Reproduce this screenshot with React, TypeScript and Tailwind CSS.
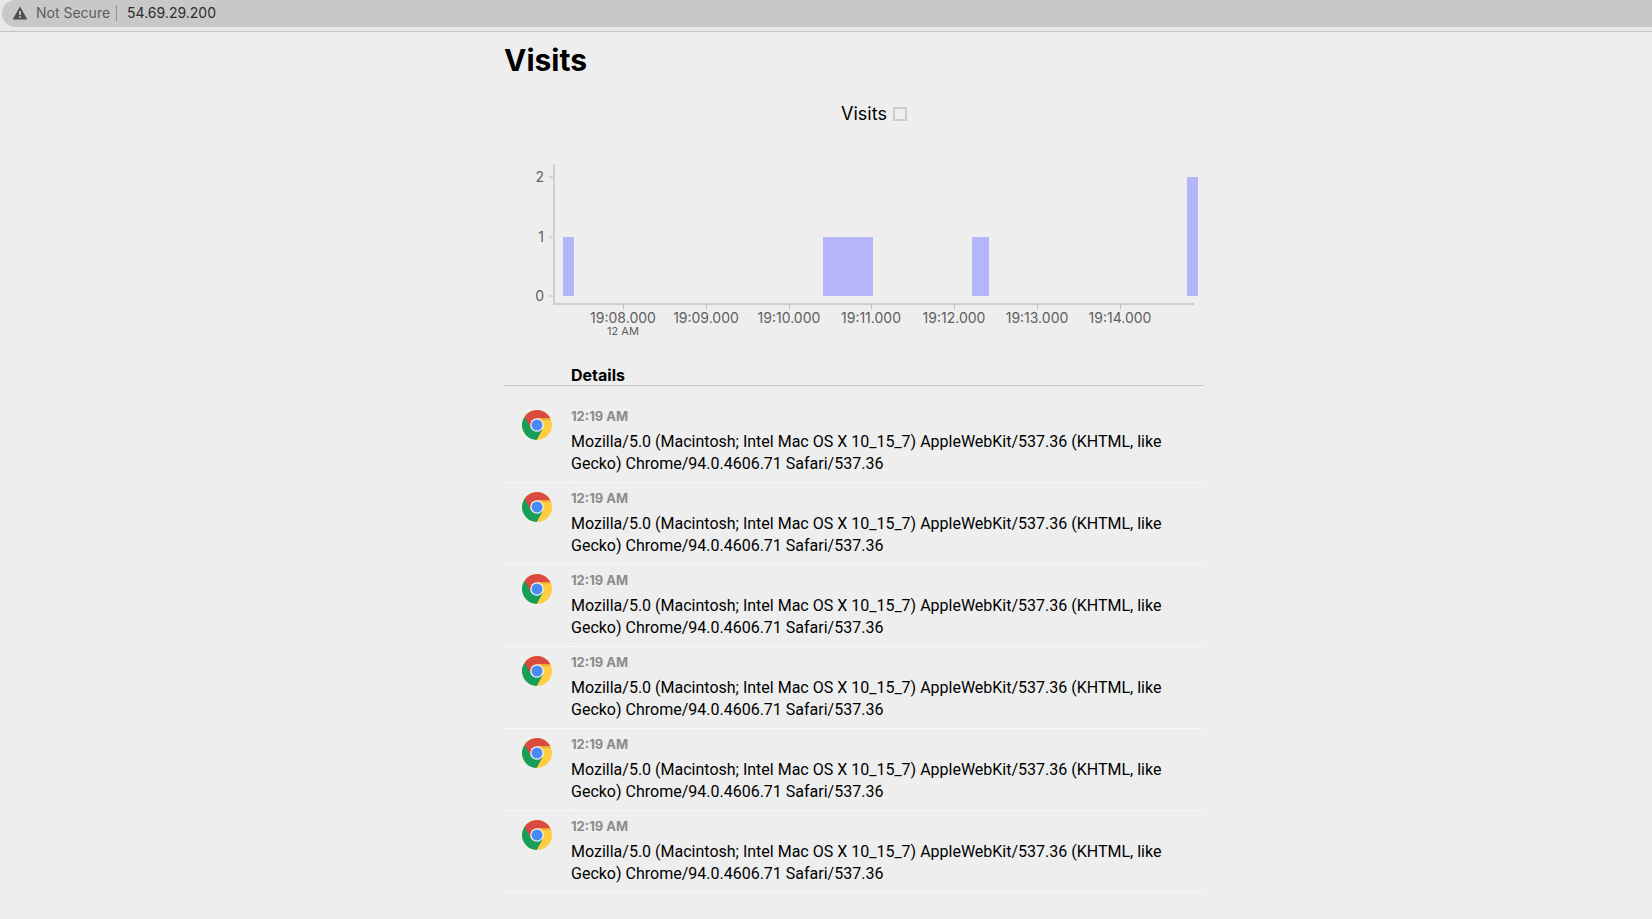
import React from "react";

const xTicks = [
  { x: 119, label: "19:08.000", sub: "12 AM" },
  { x: 202, label: "19:09.000" },
  { x: 285, label: "19:10.000" },
  { x: 367, label: "19:11.000" },
  { x: 450, label: "19:12.000" },
  { x: 533, label: "19:13.000" },
  { x: 616, label: "19:14.000" },
];

const yTicks = [
  { y: 37, label: "2" },
  { y: 97, label: "1" },
  { y: 156, label: "0" },
];

const bars = [
  { x: 59, width: 11, top: 97 },
  { x: 319, width: 17, top: 97 },
  { x: 336, width: 17, top: 97 },
  { x: 353, width: 16, top: 97 },
  { x: 468, width: 17, top: 97 },
  { x: 683, width: 11, top: 37 },
];

const seams = [336, 353];

const agent =
  "Mozilla/5.0 (Macintosh; Intel Mac OS X 10_15_7) AppleWebKit/537.36 (KHTML, like Gecko) Chrome/94.0.4606.71 Safari/537.36";

const visits = Array.from({ length: 6 }, (_, id) => ({ id, time: "12:19 AM", agent }));

function ChromeLogo() {
  return (
    <svg viewBox="0 0 48 48" className="block size-[30px]" role="img" aria-label="Chrome">
      <defs>
        <linearGradient id="chromeShade" x1="0" y1="0" x2="0" y2="1">
          <stop offset="0" stopColor="#b83a2e" stopOpacity="0.5" />
          <stop offset="1" stopColor="#b83a2e" stopOpacity="0" />
        </linearGradient>
      </defs>
      <circle cx="24" cy="24" r="24" fill="#ffcd40" />
      <path d="M24 24 L33.5 29.5 L23.2 48 A24 24 0 0 1 3.8 11.2 Z" fill="#169f5b" />
      <path d="M24 13.2 H45.4 A24 24 0 0 0 4.2 10.6 L14.6 29.3 L24 24 Z" fill="#db4a3e" />
      <path d="M24 13.2 H45.4 L46.4 16 L33 17 Z" fill="#e5a62c" opacity="0.6" />
      <path d="M4.2 10.6 L14.6 29.3 L14 22 Z" fill="url(#chromeShade)" />
      <path d="M33.4 29.4 L23.2 48 L21 47.6 L28.5 33.5 Z" fill="#0f8b4c" opacity="0.35" />
      <circle cx="24" cy="24" r="10.9" fill="#f4f4f4" />
      <circle cx="24" cy="24" r="8.8" fill="#4a8af5" />
    </svg>
  );
}

function AddressBar() {
  return (
    <header className="flex h-8 border-b border-[#c4c4c4] bg-[#e8e8e8] pb-1 pl-[2px]">
      <div className="flex flex-1 items-center rounded-l-full bg-[#c8c8c8] pb-px pl-[10px] text-sm leading-5">
        <button type="button" className="flex items-center gap-2 text-[#5b5e63]">
          <svg viewBox="0 0 16 14" className="h-[14px] w-4" aria-hidden="true">
            <path d="M8 0.6 L15.4 13.4 H0.6 Z" fill="#4d5054" />
            <path d="M7.2 5 H8.8 V9 H7.2 Z M7.2 10.2 H8.8 V11.8 H7.2 Z" fill="#dadada" />
          </svg>
          Not Secure
        </button>
        <span className="mr-[10px] ml-[6px] h-4 w-px bg-[#929292]" />
        <input
          aria-label="Address"
          defaultValue="54.69.29.200"
          className="min-w-0 flex-1 bg-transparent text-[#2c2d30] outline-none"
        />
      </div>
    </header>
  );
}

function VisitsChart() {
  return (
    <svg
      viewBox="0 0 700 206"
      className="mt-[14px] block w-full"
      role="img"
      aria-label="Visits over time"
    >
      {bars.map((b) => (
        <rect key={b.x} x={b.x} y={b.top} width={b.width} height={156 - b.top} fill="#b5b5fc" />
      ))}
      {seams.map((x) => (
        <path key={x} d={`M${x - 0.5} 97 V156`} stroke="#b8b8fb" />
      ))}
      <path d="M50 24 V164 H690" fill="none" stroke="#cecece" strokeWidth="2" />
      {yTicks.map((t) => (
        <g key={t.label}>
          <path d={`M45 ${t.y} H49`} stroke="#bdbdbd" />
          <text x="40" y={t.y + 5} textAnchor="end" fontSize="14" fill="#606060">
            {t.label}
          </text>
        </g>
      ))}
      {xTicks.map((t) => (
        <g key={t.label} textAnchor="middle" fill="#606060">
          <path d={`M${t.x + 0.5} 165 V169`} stroke="#bdbdbd" />
          <text x={t.x} y="183" fontSize="14">
            {t.label}
          </text>
          {t.sub && (
            <text x={t.x} y="195" fontSize="11">
              {t.sub}
            </text>
          )}
        </g>
      ))}
    </svg>
  );
}

export default function App() {
  return (
    <div className="min-h-screen bg-[#eeeeee] font-['Inter','Liberation_Sans',sans-serif] text-black">
      <AddressBar />
      <div className="flex justify-center pl-14">
        <main className="w-full max-w-[700px] pt-2 pb-6">
          <h1 className="text-3xl leading-10 font-bold">Visits</h1>
          <h2 className="mt-[22px] flex items-center justify-center gap-[6px] pl-10 text-lg leading-6">
            Visits
            <span className="size-[14px] border-2 border-[#cccccc]" />
          </h2>
          <VisitsChart />
          <table className="mt-[17px] w-full border-separate border-spacing-0 text-left">
            <thead>
              <tr>
                <th className="w-[67px] border-b border-[#c8c8c8] p-0" />
                <th className="border-b border-[#c8c8c8] p-0 pt-[2px] text-base leading-5 font-bold">
                  Details
                </th>
              </tr>
            </thead>
            <tbody>
              <tr aria-hidden="true">
                <td colSpan={2} className="h-[15px] p-0" />
              </tr>
              {visits.map((v) => (
                <tr key={v.id} className="align-top">
                  <td className="border-b border-dotted border-white p-0 pt-[9px] pl-[18px]">
                    <ChromeLogo />
                  </td>
                  <td className="border-b border-dotted border-white px-0 pt-[6px] pb-[7px]">
                    <time className="block text-[13px] leading-[18px] font-bold text-[#8b8b8b]">
                      {v.time}
                    </time>
                    <p className="mt-[6px] font-['Roboto','Liberation_Sans',sans-serif] text-base leading-[22px]">
                      {v.agent}
                    </p>
                  </td>
                </tr>
              ))}
            </tbody>
          </table>
        </main>
      </div>
    </div>
  );
}
